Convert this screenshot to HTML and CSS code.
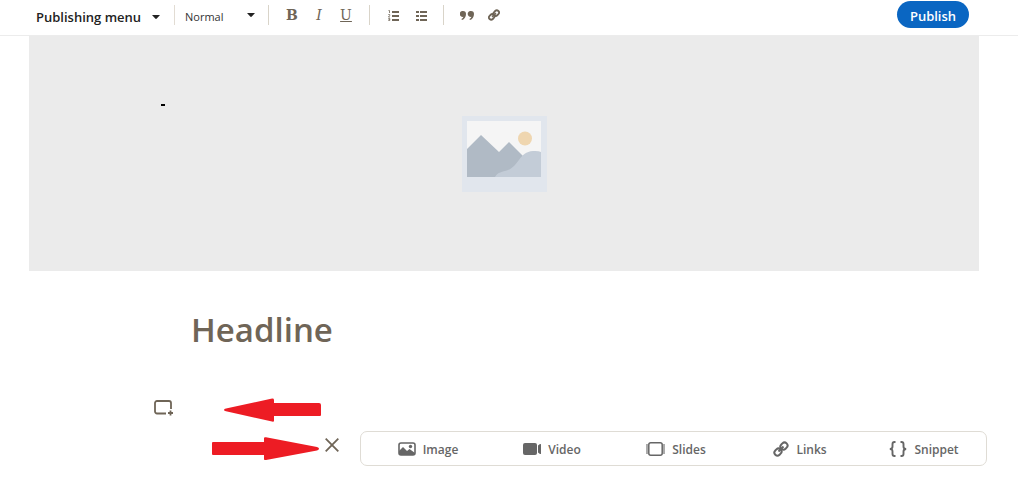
FILE: index.html
```html
<!DOCTYPE html>
<html lang="en">
<head>
    <meta charset="UTF-8">
    <meta name="viewport" content="width=device-width, initial-scale=1.0">
    <title>Publishing menu</title>
    <link rel="stylesheet" href="styles.css">
</head>
<body>

    <header class="topbar">
        <button type="button" class="menu-button">
            Publishing menu
            <svg class="caret" width="8" height="4" viewBox="0 0 10 5"><path d="M0 0h10L6 4.500Q5 5.300 4 4.500z"/></svg>
        </button>

        <div class="style-picker">
            <select aria-label="Text style">
                <option>Normal</option>
                <option>Heading 1</option>
                <option>Heading 2</option>
            </select>
            <svg class="caret" width="8" height="4" viewBox="0 0 10 5"><path d="M0 0h10L6 4.500Q5 5.300 4 4.500z"/></svg>
        </div>

        <div class="tools text-tools">
            <button type="button" class="bold" aria-label="Bold">B</button>
            <button type="button" class="italic" aria-label="Italic">I</button>
            <button type="button" class="underline" aria-label="Underline">U</button>
        </div>

        <div class="tools list-tools">
            <button type="button" aria-label="Numbered list">
                <svg width="12" height="11" viewBox="0 0 12 11">
                    <path d="M4 1h7v2H4zM4 5h7v2H4zM4 9h7v2H4z"/>
                    <path d="M.5.5h1v2.500M.3 4.500h1.400v1L.4 7h1.600M.3 8.500h1.500v2H.3M.6 9.500h1.200" fill="none" stroke="currentColor" stroke-width=".8"/>
                </svg>
            </button>
            <button type="button" aria-label="Bulleted list">
                <svg width="12" height="11" viewBox="0 0 12 11">
                    <path d="M4 1h7v2H4zM4 5h7v2H4zM4 9h7v2H4zM0 1h3v2H0zM0 5h3v2H0zM0 9h3v2H0z"/>
                </svg>
            </button>
        </div>

        <div class="tools insert-tools">
            <button type="button" aria-label="Quote">
                <svg width="14" height="9" viewBox="0 0 14 9">
                    <path d="M3 0a3 3 0 0 1 3 3C6 6 4.500 8.300 2 9L1.400 8C2.600 7.400 3.200 6.700 3.300 5.800A2.950 2.950 0 1 1 3 0z"/>
                    <path d="M11 0a3 3 0 0 1 3 3c0 3-1.500 5.300-4 6l-.6-1c1.200-.6 1.800-1.300 1.900-2.200A2.950 2.950 0 1 1 11 0z"/>
                </svg>
            </button>
            <button type="button" aria-label="Link">
                <svg width="12" height="12" viewBox="0 0 16 16" fill="none" stroke="currentColor" stroke-width="2.400">
                    <rect x="7" y="2.500" width="8" height="6" rx="3" transform="rotate(-45 11 5.500)"/>
                    <rect x="1" y="7.500" width="8" height="6" rx="3" transform="rotate(-45 5 10.500)"/>
                    <path d="M5.500 10.500l5-5"/>
                </svg>
            </button>
        </div>

        <button type="button" class="publish">Publish</button>
    </header>

    <main>
        <section class="cover">
            <span class="cursor-mark"></span>
            <svg width="85" height="76" viewBox="0 0 85 76">
                <path d="M0 0h85v76H0z" fill="#e1e6ed"/>
                <path d="M5 5h74v56H5z" fill="#f5f5f5"/>
                <circle cx="63" cy="22.500" r="7" fill="#efd6b0"/>
                <path d="M5 33l14-14 18 17 10-10 16 16v19H5z" fill="#b0bac5"/>
                <path d="M33 61c3-5 7-5 13-7 11-4 11-18 25-19q5-.5 8 1v25z" fill="#c3ccd7"/>
            </svg>
        </section>

        <h1>Headline</h1>

        <div class="add-row">
            <button type="button" aria-label="Add content">
                <svg width="20" height="16" viewBox="0 0 20 16" fill="none" stroke="currentColor" stroke-width="1.800">
                    <path d="M12 13.500H3a2 2 0 0 1-2-2V3a2 2 0 0 1 2-2h12a2 2 0 0 1 2 2v6M16.500 10.500v5M14 13h5"/>
                </svg>
            </button>
            <svg class="arrow" width="97" height="24" viewBox="0 0 97 24"><path d="M0 12Q0 11 2 10.600L47 .7Q50 0 50 2v3h45q2 0 2 2v10q0 1-1 1H50v5q0 1-2 .6L2 13.300Q0 13 0 12z"/></svg>
        </div>

        <div class="insert-row">
            <svg class="arrow" width="107" height="23" viewBox="0 0 107 23"><path d="M107 11.500q0-1-2-1.500L54 .3Q52 0 52 1v4H1Q0 5 0 6v11q0 1 1 1h51v4q0 1.300 2 1l51-9.500q2-.5 2-2z"/></svg>
            <button type="button" class="close" aria-label="Close">
                <svg width="14" height="14" viewBox="0 0 14 14" fill="none" stroke="currentColor" stroke-width="1.800"><path d="M.7.7l12.600 12.600M13.300.7L.7 13.300"/></svg>
            </button>

            <div class="insert-menu">
                <button type="button">
                    <svg width="18" height="14" viewBox="0 0 18 14">
                        <rect x="1" y="1" width="16" height="12" rx="2" fill="none" stroke="currentColor" stroke-width="1.600"/>
                        <path d="M1 9l4-4 4 4 2.500-2L17 11v2H1z"/>
                        <circle cx="12.500" cy="4.500" r="1.700"/>
                    </svg>
                    Image
                </button>
                <button type="button">
                    <svg width="18" height="12" viewBox="0 0 18 12"><rect width="14" height="12" rx="2"/><path d="M15 2.500L17 1q1-.3 1 .5v9q0 .8-1 .5l-2-1.500z"/></svg>
                    Video
                </button>
                <button type="button">
                    <svg width="19" height="14" viewBox="0 0 19 14">
                        <path d="M0 2h2v10H0zM17 2h2v10h-2z" opacity=".55"/>
                        <rect x="2.800" y=".8" width="13.400" height="12.400" rx="2" fill="none" stroke="currentColor" stroke-width="1.500"/>
                    </svg>
                    Slides
                </button>
                <button type="button">
                    <svg width="16" height="16" viewBox="0 0 16 16" fill="none" stroke="currentColor" stroke-width="2">
                        <rect x="7.200" y="2" width="7.500" height="6" rx="3" transform="rotate(-45 11 5)"/>
                        <rect x="1.200" y="8" width="7.500" height="6" rx="3" transform="rotate(-45 5 11)"/>
                        <path d="M5.500 10.500l5-5"/>
                    </svg>
                    Links
                </button>
                <button type="button">
                    <svg width="18" height="16" viewBox="0 0 18 16" fill="none" stroke="currentColor" stroke-width="1.900">
                        <path d="M6.500 1H5.500Q3.500 1 3.500 3v2.500Q3.500 8 .8 8q2.700 0 2.700 2.500V13q0 2 2 2h1M11.500 1h1q2 0 2 2v2.500q0 2.500 2.700 2.500-2.700 0-2.700 2.500V13q0 2-2 2h-1"/>
                    </svg>
                    Snippet
                </button>
            </div>
        </div>
    </main>

</body>
</html>
```
FILE: styles.css
```css
* {
    box-sizing: border-box;
}

body {
    margin: 0;
    font-family: "Open Sans", "Noto Sans", sans-serif;
    background-color: #fff;
    color: #222;
}

button {
    padding: 0;
    border: none;
    background: none;
    font-family: inherit;
    color: #6f6557;
    cursor: pointer;
}

svg {
    display: block;
    flex: none;
    fill: currentColor;
}

svg[fill="none"] {
    fill: none;
}

/* toolbar */
.topbar {
    display: flex;
    align-items: flex-start;
    height: 36px;
    margin-right: 6px;
    padding-left: 36px;
    border-bottom: 1px solid #ececec;
}

.menu-button {
    display: flex;
    align-items: center;
    justify-content: space-between;
    width: 124px;
    height: 34px;
    margin-right: 14px;
    font-size: 13px;
    font-weight: 600;
    color: #222;
    white-space: nowrap;
}

.style-picker {
    display: flex;
    align-items: center;
    position: relative;
    width: 94px;
    height: 20px;
    margin-top: 5px;
    border-left: 1px solid #e2dcd3;
}

.style-picker select {
    width: 100%;
    height: 24px;
    padding: 2px 0 0 10px;
    border: none;
    background: none;
    appearance: none;
    font-family: inherit;
    font-size: 11px;
    color: #333;
}

.style-picker .caret {
    position: absolute;
    right: 13px;
    pointer-events: none;
}

.tools {
    display: flex;
    align-items: center;
    height: 20px;
    margin-top: 5px;
    border-left: 1px solid #d9d4c9;
}

.text-tools {
    width: 101px;
    padding-left: 16px;
}

.text-tools button {
    width: 14px;
    margin-right: 13px;
    font-family: "DejaVu Serif", serif;
    font-size: 14px;
    line-height: 20px;
}

.text-tools .bold {
    font-weight: bold;
}

.text-tools .italic {
    font-style: italic;
}

.text-tools .underline {
    text-decoration: underline;
}

.list-tools {
    gap: 16px;
    width: 74px;
    padding-left: 18px;
}

.insert-tools {
    gap: 14px;
    padding-left: 16px;
}

.publish {
    width: 72px;
    height: 27px;
    margin: 1px 49px 0 auto;
    padding-top: 2px;
    border-radius: 14px;
    background-color: #0a66c2;
    font-size: 13px;
    font-weight: 600;
    color: #fff;
}

/* cover image */
.cover {
    display: flex;
    align-items: center;
    justify-content: center;
    position: relative;
    height: 235px;
    margin: 0 45px 0 29px;
    background-color: #ebebeb;
}

.cursor-mark {
    position: absolute;
    top: 68px;
    left: 132px;
    width: 4px;
    height: 2px;
    background-color: #000;
}

h1 {
    margin: 35px 0 0 191px;
    font-size: 33px;
    font-weight: 600;
    line-height: 48px;
    color: #6f6557;
}

/* editor rows */
.arrow {
    color: #ed1c24;
}

.add-row {
    display: flex;
    align-items: center;
    gap: 50px;
    height: 24px;
    margin: 44px 0 9px 154px;
}

.add-row button {
    margin-bottom: 4px;
}

.insert-row {
    display: flex;
    align-items: center;
    margin: 0 37px 0 212px;
}

.close {
    margin: 0 21px 8px 6px;
}

.insert-menu {
    display: grid;
    grid-template-columns: repeat(5, 1fr);
    flex: 1;
    height: 35px;
    padding: 1px 0 0 5px;
    border: 1px solid #dfdcd5;
    border-radius: 7px;
}

.insert-menu button {
    display: flex;
    align-items: center;
    justify-content: center;
    gap: 7px;
    font-size: 12px;
    font-weight: 600;
    color: #666;
}
```
